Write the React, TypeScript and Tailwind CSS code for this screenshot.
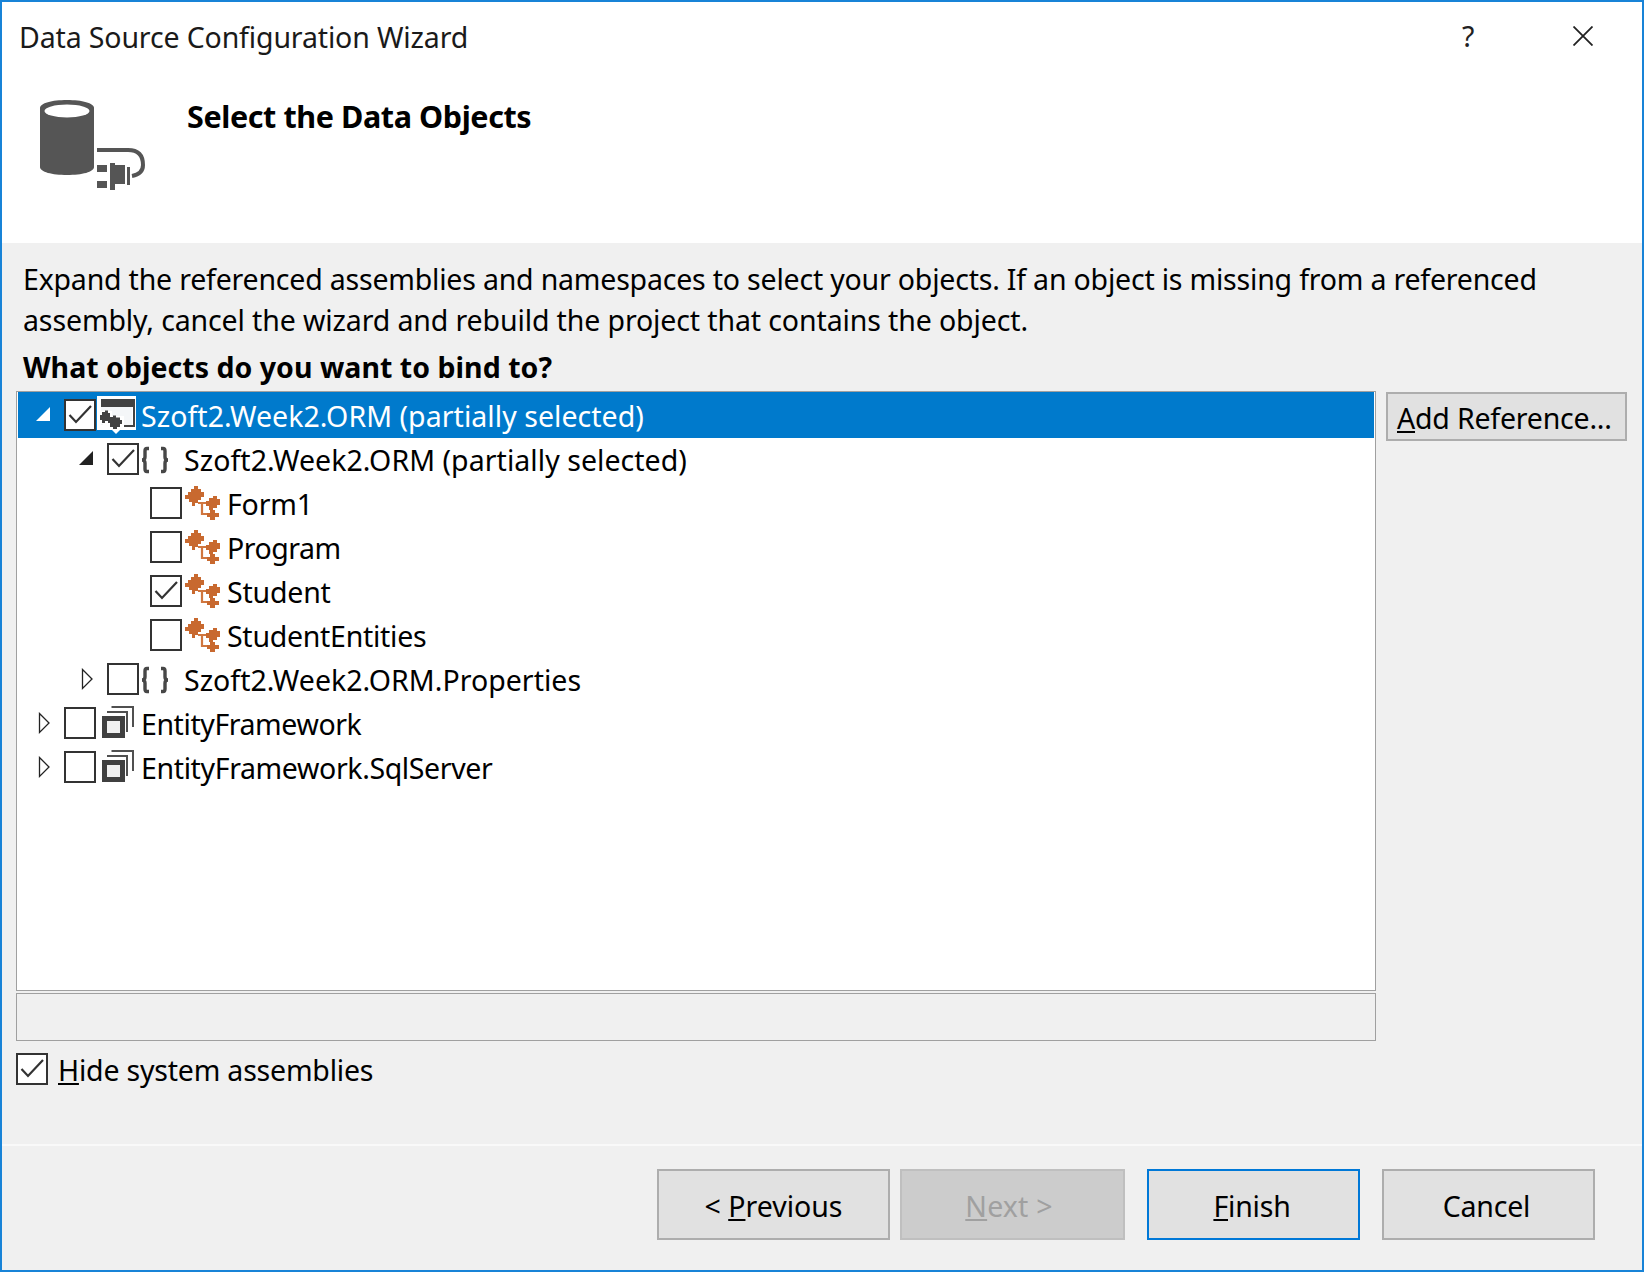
import React from "react";

const Tri = ({ kind }: { kind: "white" | "dark" | "hollow" }) => (
  <svg width="14" height="24" viewBox="0 0 14 24" className="shrink-0">
    {kind === "white" && <polygon points="14,3 14,17 0,17" fill="#ffffff" />}
    {kind === "dark" && <polygon points="14,3 14,17 0,17" fill="#222222" />}
    {kind === "hollow" && <polygon points="3.5,1.5 13,11 3.5,20.5" fill="#ffffff" stroke="#222222" strokeWidth="1.3" />}
  </svg>
);

const Check = ({ checked, mark = "#333333" }: { checked?: boolean; mark?: string }) => (
  <span className="w-8 h-8 shrink-0 border-[2px] border-[#333333] bg-white flex items-center justify-center -mt-[2px]">
    {checked && (
      <svg width="28" height="28" viewBox="0 0 28 28">
        <polyline points="3.5,14 10,21 25,5" fill="none" stroke={mark} strokeWidth="2.2" />
      </svg>
    )}
  </span>
);

const IconProject = () => (
  <svg width="45" height="44" viewBox="0 0 45 44">
    <rect x="1" y="2" width="39" height="34" fill="#ffffff" />
    <rect x="5" y="5" width="34" height="8" fill="#424242" />
    <path d="M38 13 V32 H28" fill="none" stroke="#424242" strokeWidth="2" />
    <rect x="5" y="13" width="31" height="18" fill="#f4f6f8" />
    <path d="M1 17 H16 V22 H28 V36 H24 L20 40 L16 36 H7 V30 H1z" fill="#ffffff" />
    <path d="M6 18 H9 V16.5 H12 V19 H14 V23 H17 V21.5 H20 V23.5 H24 V26 H26 V30 H24 V33 H21 V35 H17 V33 H14 V29 H12 V27 H9 V29 H6 V26 H4 V21 H6z" fill="#424242" />
  </svg>
);

const IconBraces = () => (
  <svg width="45" height="44" viewBox="0 0 45 44">
    <path d="M10 10.5 H8 Q6 10.5 6 13 V19 Q6 22 3 22 Q6 22 6 25 V31 Q6 33.5 8 33.5 H10" fill="none" stroke="#474747" strokeWidth="3.4" />
    <path d="M22 10.5 H24 Q26 10.5 26 13 V19 Q26 22 29 22 Q26 22 26 25 V31 Q26 33.5 24 33.5 H22" fill="none" stroke="#474747" strokeWidth="3.4" />
  </svg>
);

const IconClass = () => (
  <svg width="45" height="44" viewBox="0 0 45 44">
    <path d="M3 13 H6 V10 H9 V7 H12 V4 H16 V7 H19 V10 H22 V15 H19 V18 H16 V21 H13 V24 H10 V20 H7 V17 H3z" fill="#c8692f" />
    <path d="M16 21 H27 M20 20 V32 H27" fill="none" stroke="#d0763f" strokeWidth="2.2" />
    <path d="M24 19 H27 V16 H31 V14 H35 V17 H38 V23 H35 V26 H31 V28 H27 V24 H24z" fill="#c8692f" />
    <path d="M25 31 H28 V28 H33 V31 H37 V35 H33 V38 H28 V35 H25z" fill="#c8692f" />
  </svg>
);

const IconAssembly = () => (
  <svg width="45" height="44" viewBox="0 0 45 44">
    <path d="M15.5 5 H37 V25" fill="none" stroke="#505050" strokeWidth="2" />
    <path d="M11 10 H31 V30" fill="none" stroke="#505050" strokeWidth="2" />
    <rect x="6" y="14" width="23" height="22" fill="#404040" />
    <rect x="11" y="19" width="13" height="12" fill="#f0f0f0" />
  </svg>
);

type RowProps = {
  depth: "d0" | "d1" | "d2";
  tri?: "white" | "dark" | "hollow";
  checked?: boolean;
  selected?: boolean;
  icon: React.ReactNode;
  label: string;
  labelClass: string;
};

const Row = ({ depth, tri, checked, selected, icon, label, labelClass }: RowProps) => (
  <div
    className={`flex items-center shrink-0 ${selected ? "h-[46px] pt-[2px] bg-[#007acc] text-white" : "h-[44px] text-black"} ${
      depth === "d0" ? "pl-0" : depth === "d1" ? "pl-[43px]" : "pl-[86px]"
    }`}
  >
    <span className="w-[46px] h-[44px] flex items-center justify-end pr-[14px] shrink-0">{tri && <Tri kind={tri} />}</span>
    <Check checked={checked} />
    <span className="w-[45px] h-[44px] shrink-0">{icon}</span>
    <span className={`whitespace-nowrap ${labelClass}`}>{label}</span>
  </div>
);

const WizardButton = ({ className, children }: { className: string; children: React.ReactNode }) => (
  <div className={`h-[71px] pt-[3px] flex items-center justify-center whitespace-nowrap ${className}`}>{children}</div>
);

export default function App() {
  return (
    <div className="w-[1644px] h-[1272px] border-[2px] border-[#1883d7] bg-[#f0f0f0] flex flex-col overflow-hidden font-['Noto_Sans','Open_Sans',sans-serif] text-[28.5px] leading-[40px] text-black tracking-[-0.2px]">
      <header className="h-[241px] shrink-0 bg-white relative">
        <div className="flex items-center h-[70px] pl-[17px] pr-[49px]">
          <span className="flex-1 text-[#1a1a1a] tracking-[-0.14px]">Data Source Configuration Wizard</span>
          <span className="w-[111px] -mt-[2px] text-[#222222]">?</span>
          <svg width="20" height="20" viewBox="0 0 20 20" className="-mt-[2px]">
            <path d="M0.5 0.5 L19.5 19.5 M19.5 0.5 L0.5 19.5" stroke="#222222" strokeWidth="1.8" />
          </svg>
        </div>
        <div className="flex items-start pl-[36px]">
          <svg width="110" height="100" viewBox="38 98 110 100" className="mt-[26px] shrink-0">
            <path d="M40 108 c0-5 12-8 27-8 s27 3 27 8 v59 c0 5-12 8-27 8 s-27-3-27-8z" fill="#555555" />
            <ellipse cx="67" cy="111" rx="22.5" ry="6.5" fill="#ffffff" />
            <path d="M97 150 H128 Q143 150 143 165 Q143 174 132 176" fill="none" stroke="#555555" strokeWidth="4" />
            <rect x="97" y="165" width="10" height="7" fill="#555555" />
            <rect x="97" y="181" width="10" height="7" fill="#555555" />
            <path d="M110 163 H115 V165 H125 V184 H115 V190 H110z" fill="#555555" />
            <rect x="127" y="167" width="3" height="18" fill="#555555" />
          </svg>
          <h1 className="ml-[39px] mt-[24px] font-bold text-[30.5px] leading-[40px] tracking-[-0.4px]">Select the Data Objects</h1>
        </div>
      </header>

      <main className="h-[901px] shrink-0 flex flex-col pt-[16px]">
        <div className="pl-[21px] pr-[20px]">
          <p className="leading-[41px]">
            Expand the referenced assemblies and namespaces to select your objects. If an object is missing from a referenced
            <br />
            <span className="tracking-[-0.12px]">assembly, cancel the wizard and rebuild the project that contains the object.</span>
          </p>
          <p className="mt-[6px] font-bold tracking-[0.03px]">What objects do you want to bind to?</p>
        </div>
        <div className="flex items-start pl-[14px] mt-[4px]">
          <div className="w-[1360px] h-[600px] shrink-0 bg-white border border-[#a0a0a0] flex flex-col px-[1px]">
            <Row depth="d0" tri="white" checked selected icon={<IconProject />} labelClass="tracking-[0.05px]" label="Szoft2.Week2.ORM (partially selected)" />
            <Row depth="d1" tri="dark" checked icon={<IconBraces />} labelClass="tracking-[0.05px]" label="Szoft2.Week2.ORM (partially selected)" />
            <Row depth="d2" icon={<IconClass />} labelClass="tracking-[-0.2px]" label="Form1" />
            <Row depth="d2" icon={<IconClass />} labelClass="tracking-[-0.5px]" label="Program" />
            <Row depth="d2" checked icon={<IconClass />} labelClass="tracking-[-0.2px]" label="Student" />
            <Row depth="d2" icon={<IconClass />} labelClass="tracking-[-0.28px]" label="StudentEntities" />
            <Row depth="d1" tri="hollow" icon={<IconBraces />} labelClass="tracking-[0.03px]" label="Szoft2.Week2.ORM.Properties" />
            <Row depth="d0" tri="hollow" icon={<IconAssembly />} labelClass="tracking-[-0.42px]" label="EntityFramework" />
            <Row depth="d0" tri="hollow" icon={<IconAssembly />} labelClass="tracking-[-0.37px]" label="EntityFramework.SqlServer" />
          </div>
          <div className="ml-[10px] mt-[1px] w-[241px] h-[49px] pt-[2px] border-[2px] border-[#adadad] bg-[#e1e1e1] flex items-center pl-[9px] whitespace-nowrap">
            <span>
              <u>A</u>dd Reference...
            </span>
          </div>
        </div>
        <div className="ml-[14px] mt-[2px] w-[1360px] h-[48px] border border-[#a0a0a0] bg-[#f0f0f0]"></div>
        <div className="ml-[14px] mt-[9px] flex items-center">
          <Check checked />
          <span className="ml-[10px]">
            <u>H</u>ide system assemblies
          </span>
        </div>
      </main>

      <footer className="flex-1 border-t-[2px] border-[#f9f9f9] flex items-start pt-[23px] pl-[655px]">
        <WizardButton className="w-[233px] border-[2px] border-[#adadad] bg-[#e1e1e1]">
          <span className="tracking-[0px]">
            &lt; <u>P</u>revious
          </span>
        </WizardButton>
        <WizardButton className="ml-[10px] w-[225px] border-[2px] border-[#bfbfbf] bg-[#cccccc] text-[#a0a0a0]">
          <span className="tracking-[0.2px] -ml-[7px]">
            <u>N</u>ext &gt;
          </span>
        </WizardButton>
        <WizardButton className="ml-[22px] w-[213px] border-[2px] border-[#0078d7] bg-[#e1e1e1]">
          <span className="-ml-[3px]">
            <u>F</u>inish
          </span>
        </WizardButton>
        <WizardButton className="ml-[22px] w-[213px] border-[2px] border-[#adadad] bg-[#e1e1e1]">
          <span className="-ml-[4px]">Cancel</span>
        </WizardButton>
      </footer>
    </div>
  );
}
